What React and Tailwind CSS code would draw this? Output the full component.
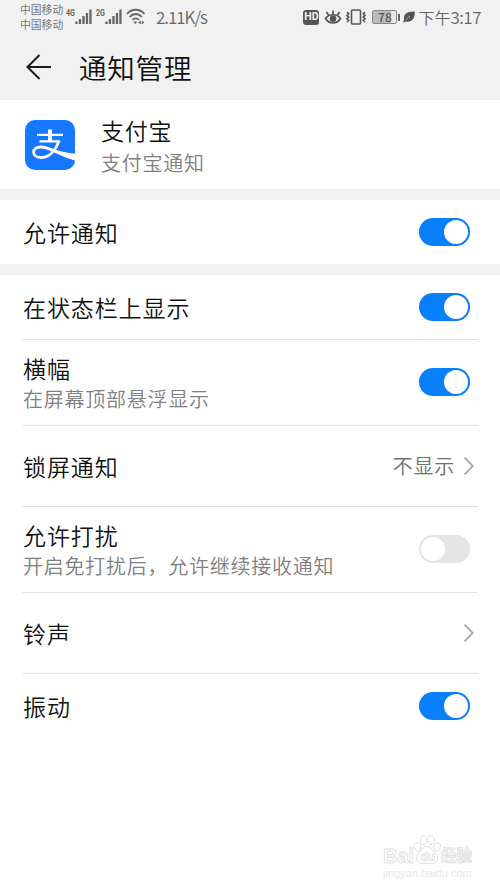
import { useState } from 'react'

function Toggle({ defaultOn = false }) {
  const [on, setOn] = useState(defaultOn)
  return (
    <button
      role="switch"
      aria-checked={on}
      onClick={() => setOn(!on)}
      className={`mr-[30px] flex h-7 w-[51px] shrink-0 items-center rounded-full px-[2px] ${on ? 'justify-end bg-[#087ffb]' : 'justify-start bg-[#e5e5e5]'}`}
    >
      <span className="size-6 rounded-full bg-white" />
    </button>
  )
}

function Chevron() {
  return (
    <svg viewBox="0 0 12 20" className="mr-[25px] h-5 w-3 shrink-0" fill="none" stroke="#a8a8a8" strokeWidth="1.8">
      <path d="M1.5 1.7 9.8 10 1.5 18.3" />
    </svg>
  )
}

function Row({ title, note, height, divider = true, children }) {
  return (
    <div className={`relative flex items-center justify-between pl-[23px] ${divider ? 'pb-[2px]' : ''} ${height}`}>
      <div className={`flex flex-col ${divider ? 'pt-[2px]' : ''}`}>
        <span className="text-[23px] leading-[31px] font-[350] tracking-[0.9px] text-[#111]">{title}</span>
        {note && <span className="text-[20px] leading-[29px] font-[350] tracking-[0.75px] text-[#808080]">{note}</span>}
      </div>
      {children}
      {divider && <div className="absolute right-[22px] bottom-0 left-[22px] h-px bg-[#e2e2e2]" />}
    </div>
  )
}

function Signal({ label }) {
  return (
    <div className="flex items-start">
      <span className="w-[9px] origin-left scale-x-75 font-['Roboto',sans-serif] text-[9.5px] leading-[9px] font-bold whitespace-nowrap">{label}</span>
      <svg viewBox="0 0 17 16" className="mt-px h-4 w-[17px]" fill="currentColor">
        <rect x="0.3" y="12.5" width="2.3" height="2.5" />
        <rect x="3.8" y="10" width="2.3" height="5" />
        <rect x="7.3" y="7" width="2.3" height="8" />
        <rect x="10.8" y="4" width="2.3" height="11" />
        <rect x="14.3" y="0.5" width="2.3" height="14.5" />
      </svg>
    </div>
  )
}

function StatusBar() {
  return (
    <div className="flex h-[34px] items-start pl-5 text-[#666]">
      <div className="mt-[2px] flex w-[46px] flex-col text-[10.8px] leading-[15px] whitespace-nowrap text-[#777]">
        <span>中国移动</span>
        <span>中国移动</span>
      </div>
      <div className="mt-2 flex gap-[4px]">
        <Signal label="4G" />
        <Signal label="2G" />
        <svg viewBox="0 0 20 18" className="h-[18px] w-5" fill="none" stroke="currentColor" strokeWidth="1.8">
          <path d="M1 5.8C6 .4 13.5.4 18.5 5.8M3.6 9c3.6-4 8.7-4 12.3 0M6.4 12c2-2.2 4.7-2.2 6.7 0" />
          <path d="M7.800 13.800h3l-1.500 2zM12.500 14.500l2-1.500v3zM18 14.500l-2-1.500v3z" fill="currentColor" strokeWidth="0.5" />
        </svg>
      </div>
      <span className="mt-[6px] ml-[10px] text-[17px] leading-[22px] font-[350] tracking-[-1px]">2.11K/s</span>
      <div className="mt-[6px] mr-[19px] ml-auto flex h-[22px] items-center">
        <span className="flex h-[15px] w-4 items-center justify-center rounded-[3px] bg-[#555] font-['Roboto',sans-serif] text-[10.5px] leading-none font-bold text-[#f1f1f1]">HD</span>
        <svg viewBox="0 0 18 16" className="ml-[5px] h-4 w-[18px]" fill="none" stroke="#555" strokeWidth="1.7">
          <path d="M1.5 9.5C5 4.5 13 4.5 16.5 9.5 13 15.5 5 15.5 1.5 9.5Z" />
          <circle cx="9" cy="9.8" r="2.4" fill="#555" />
          <path d="M9 5V1.5M4.5 6 2.5 3M13.5 6l2-3" />
        </svg>
        <svg viewBox="0 0 20 16" className="ml-1 h-4 w-5" fill="none" stroke="#555" strokeWidth="1.6">
          <rect x="5.5" y="1" width="9" height="14" rx="1" />
          <path d="m1 3 1.7 1.7L1 6.4l1.7 1.7L1 9.8l1.7 1.7L1 13M19 3l-1.7 1.7L19 6.4l-1.7 1.7L19 9.8l-1.7 1.7L19 13" />
        </svg>
        <div className="ml-[6px] flex h-[14px] w-[25px] items-center justify-center rounded-[2px] border border-[#888] bg-linear-to-r from-[#bbb] from-78% to-[#e8e8e8] to-78% text-[12px] leading-none font-medium text-[#555]">78</div>
        <span className="ml-px h-[7px] w-[2px] bg-[#666]" />
        <svg viewBox="0 0 12 12" className="ml-[3px] size-3" fill="#555">
          <path d="M11.800.5C4 0 0 3.500 1 8.500L.2 11.300l.8.500 1-1.300C9.500 12 12 7 11.800.5Z" />
          <path d="M3 9 7 5" stroke="#f1f1f1" strokeWidth="0.5" />
        </svg>
        <span className="ml-[3px] flex text-[16px] leading-[22px] font-[350] whitespace-nowrap">
          下午<span className="text-[17px] tracking-[-0.5px]">3:17</span>
        </span>
      </div>
    </div>
  )
}

function AlipayLogo() {
  return (
    <svg viewBox="0 0 50 50" className="size-[50px] shrink-0">
      <rect width="50" height="50" rx="10" fill="#1777ff" />
      <g fill="none" stroke="#fff">
        <path d="M12 14.8h26M14.5 21.3h20" strokeWidth="2.2" />
        <path d="M25 9.5V21.5" strokeWidth="4" />
        <path d="M34 20.5C31 29.5 25 37.500 16.500 37.500 6 37.500 6 27 16 27c5 0 9 2 14 4.500" strokeWidth="2.8" />
      </g>
      <path d="M22 27c9 3.300 18 5.800 28 6.800v6.700c-9-2.500-17-6-25-10.500Z" fill="#fff" />
    </svg>
  )
}

function Watermark() {
  return (
    <div className="absolute right-[27px] bottom-[10px] flex w-[90px] flex-col font-['Liberation_Sans','Noto_Sans_CJK_SC',sans-serif] whitespace-nowrap">
      <div className="flex items-center text-white [-webkit-text-stroke:0.8px_#e0e0e0]">
        <span className="w-[30px] text-[20px] leading-[22px] font-bold">Bai</span>
        <svg viewBox="0 0 28 30" className="-mt-3 h-[30px] w-7 shrink-0" fill="#fff" stroke="#dedede" strokeWidth="0.9">
          <ellipse cx="4.5" cy="12" rx="3.2" ry="4.2" transform="rotate(-15 4.5 12)" />
          <ellipse cx="10.5" cy="5.2" rx="3.2" ry="4.4" />
          <ellipse cx="18" cy="5.2" rx="3.2" ry="4.4" />
          <ellipse cx="24" cy="12" rx="3.2" ry="4.2" transform="rotate(15 24 12)" />
          <path d="M14 11.5c4 0 5 4 8.500 7s2.500 10-3 10h-11c-5.500 0-6.500-7-3-10s4.500-7 8.500-7Z" />
          <text x="7.5" y="25.5" fontSize="12" fontWeight="700" strokeWidth="0.7">du</text>
        </svg>
        <span className="text-[15.5px] leading-[22px] font-bold">经验</span>
      </div>
      <span className="text-[11px] leading-[12px] text-[#e8e8e8]">jingyan.baidu.com</span>
    </div>
  )
}

export default function App() {
  return (
    <div className="relative flex h-[889px] w-[500px] flex-col overflow-hidden bg-white font-['Noto_Sans_CJK_SC',sans-serif]">
      <header className="h-[100px] bg-[#f1f1f1]">
        <StatusBar />
        <div className="flex h-[66px] items-center pl-[26px]">
          <svg viewBox="0 0 26 26" className="size-[26px]" fill="none" stroke="#1c1c1c" strokeWidth="2">
            <path d="M25 13H1.5M13.5 1 1.5 13l12 12" />
          </svg>
          <h1 className="ml-[27px] text-[27.5px] leading-[36px] font-[350] tracking-[0.8px] text-[#111]">通知管理</h1>
        </div>
      </header>

      <section className="flex h-[89px] items-center pl-[25px]">
        <AlipayLogo />
        <div className="ml-[26px] flex flex-col pt-[3px]">
          <span className="text-[23px] leading-[32px] font-[350] tracking-[0.8px] text-[#111]">支付宝</span>
          <span className="text-[20px] leading-[33px] font-[350] tracking-[0.75px] text-[#808080]">支付宝通知</span>
        </div>
      </section>

      <div className="h-[11px] bg-[#f2f2f2]" />
      <Row title="允许通知" height="h-16" divider={false}>
        <Toggle defaultOn />
      </Row>
      <div className="h-[11px] bg-[#f2f2f2]" />

      <Row title="在状态栏上显示" height="h-[65px]">
        <Toggle defaultOn />
      </Row>
      <Row title="横幅" note="在屏幕顶部悬浮显示" height="h-[86px]">
        <Toggle defaultOn />
      </Row>
      <Row title="锁屏通知" height="h-[81px]">
        <div className="flex items-center gap-2">
          <span className="text-[20px] leading-[29px] font-[350] tracking-[0.75px] text-[#707070]">不显示</span>
          <Chevron />
        </div>
      </Row>
      <Row title="允许打扰" note="开启免打扰后，允许继续接收通知" height="h-[86px]">
        <Toggle />
      </Row>
      <Row title="铃声" height="h-[81px]">
        <Chevron />
      </Row>
      <Row title="振动" height="h-16" divider={false}>
        <Toggle defaultOn />
      </Row>

      <Watermark />
    </div>
  )
}
